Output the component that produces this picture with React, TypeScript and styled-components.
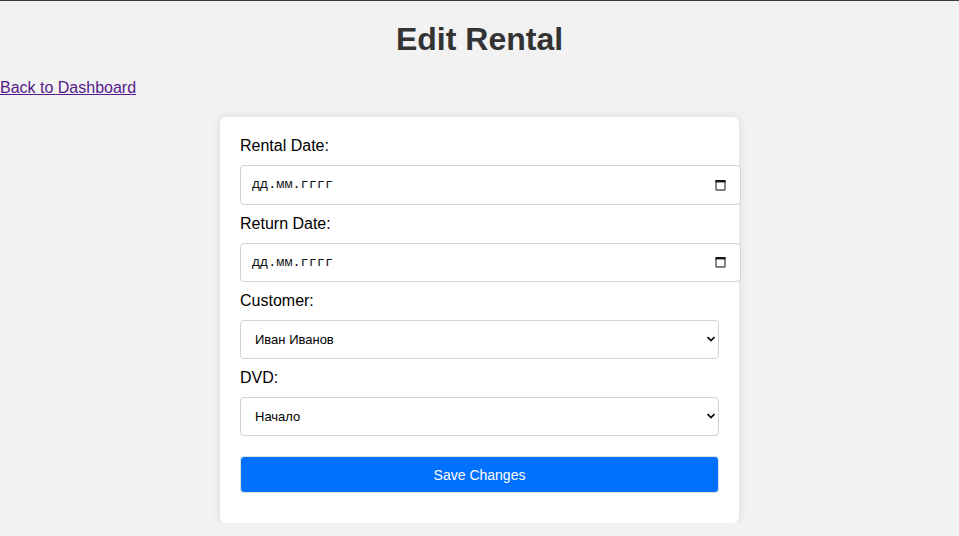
import React from "react";
import styled, { createGlobalStyle } from "styled-components";

const Global = createGlobalStyle`
  html, body { margin: 0; padding: 0; }
  body {
    background: #f2f2f2;
    font-family: "Liberation Sans", Arial, sans-serif;
    border-top: 1px solid #3b3a48;
  }
`;

const Title = styled.h1`
  margin: 20px 0 21px;
  text-align: center;
  font-size: 32px;
  line-height: 37px;
  font-weight: bold;
  color: #333;
`;

const BackLink = styled.a`
  display: inline-block;
  color: #551a8b;
  font-size: 16px;
  line-height: 18px;
  text-decoration: underline;
`;

const Card = styled.form`
  width: 479px;
  margin: 20px auto 0;
  padding: 20px 20px 30px;
  background: #fff;
  border-radius: 6px;
  box-shadow: 0 0 10px rgba(0, 0, 0, 0.1);
  display: flex;
  flex-direction: column;
`;

const Label = styled.label`
  display: block;
  font-size: 16px;
  line-height: 18px;
  color: #000;
  margin-bottom: 10px;
`;

const DateBox = styled.div`
  box-sizing: content-box;
  width: 475px;
  height: 17.5px;
  padding: 10px 14px 10px 10px;
  border: 1px solid #d3d3d3;
  border-radius: 4px;
  margin-bottom: 10px;
  display: flex;
  align-items: center;
  justify-content: space-between;
  background: #fff;
`;

const DateText = styled.span`
  font-family: "Liberation Mono", "DejaVu Sans Mono", monospace;
  font-size: 13.5px;
  color: #111;
  padding-left: 1px;
`;

const SelectWrap = styled.div`
  position: relative;
  margin-bottom: 10px;
`;

const Select = styled.select`
  appearance: none;
  -webkit-appearance: none;
  width: 100%;
  height: 39px;
  box-sizing: border-box;
  padding: 0 14px;
  border: 1px solid #d3d3d3;
  border-radius: 4px;
  background: #fff;
  font-family: "Liberation Sans", Arial, sans-serif;
  font-size: 13px;
  color: #000;
`;

const Chevron = styled.svg`
  position: absolute;
  right: 3px;
  top: 15px;
  pointer-events: none;
`;

const SaveButton = styled.button`
  margin-top: 10px;
  height: 37px;
  width: 100%;
  border: 1px solid #e0e0e0;
  border-radius: 4px;
  background: #0070ff;
  color: #fff;
  font-family: "Liberation Sans", Arial, sans-serif;
  font-size: 14px;
  cursor: pointer;
`;

const CalendarIcon = () => (
  <svg width="11" height="12" viewBox="0 0 11 12">
    <rect x="1" y="1.7" width="9" height="9.3" rx="0.8" fill="none" stroke="#555" strokeWidth="1.4" />
    <rect x="0.5" y="1" width="10" height="2.4" fill="#111" />
  </svg>
);

const DateField = () => (
  <DateBox>
    <DateText>дд.мм.гггг</DateText>
    <CalendarIcon />
  </DateBox>
);

const SelectField = ({ value }: { value: string }) => (
  <SelectWrap>
    <Select defaultValue={value}>
      <option value={value}>{value}</option>
    </Select>
    <Chevron width="10" height="8" viewBox="0 0 10 8">
      <path d="M1.5 2.2 L5 5.6 L8.5 2.2" fill="none" stroke="#111" strokeWidth="1.8" />
    </Chevron>
  </SelectWrap>
);

export default function App() {
  return (
    <>
      <Global />
      <Title>Edit Rental</Title>
      <BackLink href="#">Back to Dashboard</BackLink>
      <Card onSubmit={(e) => e.preventDefault()}>
        <Label>Rental Date:</Label>
        <DateField />
        <Label>Return Date:</Label>
        <DateField />
        <Label>Customer:</Label>
        <SelectField value="Иван Иванов" />
        <Label>DVD:</Label>
        <SelectField value="Начало" />
        <SaveButton type="submit">Save Changes</SaveButton>
      </Card>
    </>
  );
}
